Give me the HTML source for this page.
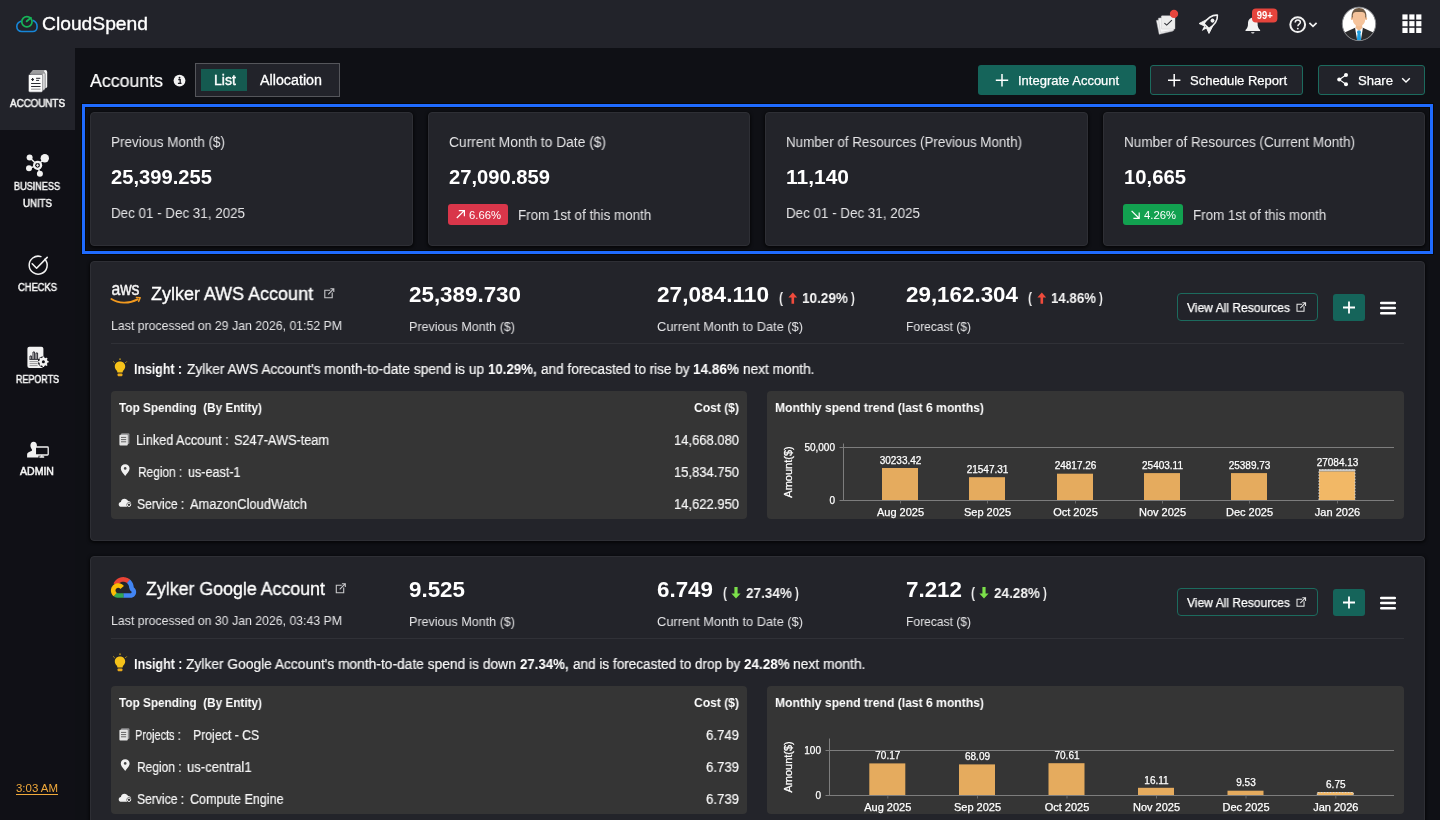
<!DOCTYPE html>
<html><head><meta charset="utf-8"><title>CloudSpend</title><style>
html,body{margin:0;padding:0;}
body{width:1440px;height:820px;overflow:hidden;background:#0f1015;position:relative;font-family:"Liberation Sans",sans-serif;}
.r{position:absolute;box-sizing:border-box;display:block;}
.t{position:absolute;white-space:pre;transform-origin:0 50%;display:block;will-change:transform;}
b{font-weight:700;}
svg text{font-family:"Liberation Sans",sans-serif;}
svg{will-change:transform;}
</style></head>
<body>
<div class="r" style="left:0px;top:0px;width:1440px;height:48px;background:#22232a;"></div>
<div class="r" style="left:0px;top:48px;width:75px;height:772px;background:#101016;"></div>
<div class="r" style="left:0px;top:48px;width:75px;height:82px;background:#22232a;"></div>
<span class="t" style="left:42px;top:9.8px;height:27px;line-height:27px;font-size:19px;font-weight:400;color:#fff;-webkit-text-stroke:0.35px #fff;transform:scaleX(1.0134);">CloudSpend</span>
<svg class="r" style="left:0;top:0;z-index:5;pointer-events:none" width="1440" height="820" viewBox="0 0 1440 820"><path d="M21 21.2 C18.4 22 16.800 24 16.800 26.600 C16.800 29.600 19 31.500 21.600 31.500 L32.800 31.500 C35.400 31.500 37.100 29.400 37.100 26.800 C37.100 24 35.600 21.600 33.300 20.600" fill="none" stroke="#1786d8" stroke-width="1.600" stroke-linecap="round"/><circle cx="26.900" cy="21.800" r="5.150" fill="none" stroke="#17b358" stroke-width="1.700"/><path d="M26.700 21.300 L30.900 17.800" fill="none" stroke="#17b358" stroke-width="1.900" stroke-linecap="round"/><rect x="32.400" y="70" width="14.800" height="18.200" rx="2" fill="#f6f6f6"/><rect x="30.400" y="72.200" width="14.700" height="18.200" rx="2" fill="#f6f6f6" stroke="#22232a" stroke-width="0.550"/><path d="M29.200 74.600 L32.200 70.800 Q32.800 70 34 70 L44.600 70 L43.400 74.600 Z" fill="#9c9c9e"/><rect x="28.400" y="74.400" width="14.400" height="17.800" rx="1.400" fill="#fbfbfb" stroke="#22232a" stroke-width="0.550"/><path d="M31.200 79.500 h2.800 M32.600 78.100 v2.800" stroke="#2a2b31" stroke-width="1.200" fill="none"/><path d="M36.100 78.300 h4.200 M36.100 80.400 h3 M31.100 83.500 h9.400 M31.100 86.500 h9.400" stroke="#2a2b31" stroke-width="1" fill="none"/><path d="M31.100 89.200 h9.400" stroke="#a9a9ab" stroke-width="1.300" fill="none"/><path d="M29.6 157.4 L37.6 165.3 L44.8 158.3 M29 168.3 L37.6 165.3 L39.9 173.6" stroke="#f2f2f2" stroke-width="1.4" fill="none"/><circle cx="29.6" cy="157.4" r="3" fill="#f2f2f2"/><circle cx="44.8" cy="158.3" r="4.2" fill="#f2f2f2"/><circle cx="29" cy="168.3" r="3" fill="#f2f2f2"/><circle cx="39.9" cy="173.8" r="3" fill="#f2f2f2"/><circle cx="37.6" cy="165.3" r="4.6" fill="#f2f2f2"/><circle cx="37.6" cy="165.3" r="2.4" fill="#101016"/><path d="M37.6 163.7 v3.2 M36 165.3 h3.2" stroke="#f2f2f2" stroke-width="0.9"/><path d="M44.900 259.200 A9 9 0 1 1 40.900 256.600" fill="none" stroke="#f2f2f2" stroke-width="1.5" stroke-linecap="round"/><path d="M32.200 263.800 L36.600 268.200 L47.200 257.400" fill="none" stroke="#f2f2f2" stroke-width="1.6" stroke-linecap="round" stroke-linejoin="round"/><rect x="27.4" y="346.8" width="16" height="21.2" rx="2" fill="#f2f2f2"/><path d="M30 359 v-3 h1.6 v3 M33 359 v-7 h1.6 v7 M36 359 v-6 h1.6 v6 M29.4 359.4 h9.6" stroke="#2a2b31" stroke-width="1" fill="none"/><path d="M29.6 361.6 h8 M29.6 363.6 h8 M29.6 365.6 h8" stroke="#8c8c90" stroke-width="0.9"/><circle cx="43.4" cy="361.8" r="5.6" fill="#101016"/><circle cx="43.4" cy="361.8" r="3.1" fill="none" stroke="#f2f2f2" stroke-width="2.2"/><path d="M43.4 356.6 v10.4 M38.2 361.8 h10.4 M39.7 358.1 l7.4 7.4 M47.1 358.1 l-7.4 7.4" stroke="#f2f2f2" stroke-width="1.5"/><circle cx="43.4" cy="361.8" r="1.5" fill="#101016"/><path d="M33.6 441.8 c2 0 3.3 1.5 3.3 3.6 c0 1.4 -0.6 2.7 -1.4 3.5 v1.6 l3 1.4 v5.6 h-11.4 v-2.8 c0 -1.4 0.8 -2.2 2 -2.7 l2.8 -1.2 v-1.6 c-0.9 -0.8 -1.5 -2.1 -1.5 -3.6 c0 -2.2 1.3 -3.8 3.2 -3.8 z" fill="#f2f2f2"/><rect x="35.4" y="447" width="12.8" height="8" rx="0.8" fill="#101016" stroke="#f2f2f2" stroke-width="1.3"/><path d="M39.4 457 h4.8 M41.8 455 v2" stroke="#f2f2f2" stroke-width="1.3"/><path d="M1156.400 20.400 L1169.600 17.600 L1173 31 L1159.200 34.300 Z" fill="#f3f3f3" stroke="#b9b9bd" stroke-width="0.500"/><path d="M1158.400 18.200 L1171.600 16.600 L1174 30.200 L1160.400 32.400 Z" fill="#f7f7f7" stroke="#b9b9bd" stroke-width="0.500"/><rect x="1161.400" y="15.700" width="13.600" height="13.400" rx="0.600" fill="#ececec" stroke="#c6c6ca" stroke-width="0.400"/><path d="M1164.400 23.200 L1166.700 25.100 L1171.900 20.200" stroke="#2e2f35" stroke-width="1.100" fill="none"/><circle cx="1174" cy="13.900" r="4.150" fill="#e8453c"/><g transform="translate(1210.600 21.900) rotate(45)"><path d="M-4.400 1.200 L-7 9.300 L-0.800 7 Z M4.400 1.200 L7 9.300 L0.800 7 Z" fill="#f2f2f2" stroke="#f2f2f2" stroke-width="0.900" stroke-linejoin="round"/><path d="M-1.900 7.200 L0.200 12.600 L1.900 7.200 Z" fill="#f2f2f2"/><path d="M0 -9.600 C4.200 -6 4.800 0 3.600 6 L-3.600 6 C-4.800 0 -4.200 -6 0 -9.600 Z" fill="#22232a" stroke="#f2f2f2" stroke-width="1.600" stroke-linejoin="round"/><circle cx="0.400" cy="-2.300" r="2" fill="#f2f2f2"/></g><path d="M1252.800 17.800 c3.200 0 4.800 2.500 4.800 5.800 c0 3.200 0.700 5 2.500 6.300 v1.100 h-14.600 v-1.100 c1.800 -1.300 2.500 -3.100 2.500 -6.300 c0 -3.300 1.600 -5.800 4.800 -5.800 z" fill="#f2f2f2"/><path d="M1251 32.2 a1.9 1.9 0 0 0 3.6 0 z" fill="#f2f2f2"/><rect x="1252" y="8.4" width="25.4" height="14" rx="4" fill="#e5443c"/><text x="1264.8" y="19.2" font-size="10" font-weight="700" fill="#fff" text-anchor="middle" textLength="16" lengthAdjust="spacingAndGlyphs">99+</text><circle cx="1297.700" cy="24.600" r="7.400" fill="none" stroke="#f2f2f2" stroke-width="2"/><path d="M1295.2 22.6 c0 -1.7 1.1 -2.7 2.6 -2.7 c1.5 0 2.6 0.9 2.6 2.3 c0 1.9 -2.5 2 -2.5 4" fill="none" stroke="#f2f2f2" stroke-width="1.5"/><circle cx="1297.8" cy="28.6" r="0.95" fill="#f2f2f2"/><path d="M1309.4 22.8 l3.6 3.6 l3.6 -3.6" fill="none" stroke="#f2f2f2" stroke-width="1.7"/><clipPath id="av"><circle cx="1359" cy="23.900" r="16.300"/></clipPath><circle cx="1359" cy="23.900" r="16.700" fill="#fff" stroke="#8a8b8f" stroke-width="1"/><g clip-path="url(#av)"><path d="M1340 44 L1340 35 L1345.200 32.300 L1355.100 27.800 L1362.900 27.800 L1372.800 32.300 L1378 35 L1378 44 Z" fill="#2b2b2d"/><path d="M1355.500 27.300 L1362.500 27.300 L1362.800 28.800 L1360.800 40.500 L1357.200 40.500 L1355.200 28.800 Z" fill="#fff"/><path d="M1355.800 24.500 h6.400 v3.600 l-3.200 2.800 l-3.200 -2.800 z" fill="#f0bb90"/><path d="M1357.600 30.600 h2.800 l0.700 1.700 l-0.600 1.200 l0.700 6.900 h-4.400 l0.700 -6.900 l-0.600 -1.200 z" fill="#1f9ee0"/><path d="M1351.600 17.400 c-0.400 -6 2.600 -9.300 7.400 -9.300 c4.800 0 7.800 3.300 7.400 9.300 l-0.500 1.600 l-13.800 0 z" fill="#6f5a45"/><ellipse cx="1351.900" cy="18.400" rx="1" ry="1.500" fill="#e8b48a"/><ellipse cx="1366.100" cy="18.400" rx="1" ry="1.500" fill="#e8b48a"/><path d="M1352.800 15.200 c0 -2.400 1.600 -3.200 3.200 -3.200 h6 c1.600 0 3.200 0.800 3.200 3.200 v4.400 c0 3.800 -2.800 6.600 -6.200 6.600 c-3.400 0 -6.200 -2.800 -6.200 -6.600 z" fill="#f5c39b"/></g><rect x="1402.4" y="14.4" width="5.2" height="5.2" fill="#fff"/><rect x="1409.3" y="14.4" width="5.2" height="5.2" fill="#fff"/><rect x="1416.2" y="14.4" width="5.2" height="5.2" fill="#fff"/><rect x="1402.4" y="21.1" width="5.2" height="5.2" fill="#fff"/><rect x="1409.3" y="21.1" width="5.2" height="5.2" fill="#fff"/><rect x="1416.2" y="21.1" width="5.2" height="5.2" fill="#fff"/><rect x="1402.4" y="27.8" width="5.2" height="5.2" fill="#fff"/><rect x="1409.3" y="27.8" width="5.2" height="5.2" fill="#fff"/><rect x="1416.2" y="27.8" width="5.2" height="5.2" fill="#fff"/><circle cx="179.5" cy="80.6" r="5.9" fill="#f2f2f2"/><path d="M178.3 79.6 h1.9 v3.600 M177.900 83.4 h3.6" stroke="#16161c" stroke-width="1.3" fill="none"/><circle cx="179.5" cy="77.700" r="0.95" fill="#16161c"/><path d="M1002 74 v12.400 M995.8 80.2 h12.400" stroke="#fff" stroke-width="1.5"/><path d="M1174.200 74 v12.400 M1168 80.2 h12.400" stroke="#fff" stroke-width="1.5"/><path d="M1345.600 75.2 L1339.400 79.6 L1345.600 84" stroke="#fff" stroke-width="1.1" fill="none"/><circle cx="1346" cy="75" r="2" fill="#fff"/><circle cx="1339.200" cy="79.6" r="2" fill="#fff"/><circle cx="1346" cy="84.2" r="2" fill="#fff"/><path d="M1402.200 78.2 l3.800 3.800 l3.800 -3.800" fill="none" stroke="#fff" stroke-width="1.4"/><path d="M456.800 218 L464 210.800 M458.800 210.600 H464.400 V216.200" stroke="#fff" stroke-width="1.2" fill="none"/><path d="M1131.600 210.800 L1138.800 218 M1133.400 218.400 H1139.200 V212.600" stroke="#fff" stroke-width="1.2" fill="none"/></svg>
<span class="t" style="left:10px;top:96.5px;height:14px;line-height:14px;font-size:10px;font-weight:400;color:#f6f6f6;-webkit-text-stroke:0.5px #f6f6f6;transform:scaleX(0.9800);">ACCOUNTS</span>
<span class="t" style="left:14px;top:179.5px;height:14px;line-height:14px;font-size:10px;font-weight:400;color:#f6f6f6;-webkit-text-stroke:0.5px #f6f6f6;transform:scaleX(0.9095);">BUSINESS</span>
<span class="t" style="left:23px;top:196.5px;height:14px;line-height:14px;font-size:10px;font-weight:400;color:#f6f6f6;-webkit-text-stroke:0.5px #f6f6f6;transform:scaleX(0.9667);">UNITS</span>
<span class="t" style="left:18px;top:280.5px;height:14px;line-height:14px;font-size:10px;font-weight:400;color:#f6f6f6;-webkit-text-stroke:0.5px #f6f6f6;transform:scaleX(0.9355);">CHECKS</span>
<span class="t" style="left:16px;top:372.5px;height:14px;line-height:14px;font-size:10px;font-weight:400;color:#f6f6f6;-webkit-text-stroke:0.5px #f6f6f6;transform:scaleX(0.8926);">REPORTS</span>
<span class="t" style="left:20px;top:464.5px;height:14px;line-height:14px;font-size:10px;font-weight:400;color:#f6f6f6;-webkit-text-stroke:0.5px #f6f6f6;transform:scaleX(1.0548);">ADMIN</span>
<span class="t" style="left:16px;top:780.5px;height:15px;line-height:15px;font-size:11px;font-weight:400;color:#f0a93b;text-decoration:underline;text-underline-offset:2px;transform:scaleX(1.0407);">3:03 AM</span>
<span class="t" style="left:90px;top:68.8px;height:25px;line-height:25px;font-size:18px;font-weight:400;color:#fff;-webkit-text-stroke:0.2px #fff;transform:scaleX(0.9859);">Accounts</span>
<div class="r" style="left:195px;top:63px;width:145px;height:34px;background:#22232a;border:1px solid #55565b;"></div>
<div class="r" style="left:201px;top:69px;width:46px;height:22px;background:#155a50;"></div>
<span class="t" style="left:214px;top:69.8px;height:20px;line-height:20px;font-size:14px;font-weight:400;color:#fff;-webkit-text-stroke:0.4px #fff;transform:scaleX(0.9864);">List</span>
<span class="t" style="left:260px;top:69.7px;height:20px;line-height:20px;font-size:14px;font-weight:400;color:#fff;-webkit-text-stroke:0.3px #fff;transform:scaleX(1.0214);">Allocation</span>
<div class="r" style="left:978px;top:65px;width:158px;height:30px;background:#15645a;border-radius:3px;"></div>
<div class="r" style="left:1150px;top:65px;width:153px;height:30px;background:#22232a;border:1px solid #1c6b5e;border-radius:3px;"></div>
<div class="r" style="left:1318px;top:65px;width:107px;height:30px;background:#22232a;border:1px solid #1c6b5e;border-radius:3px;"></div>
<span class="t" style="left:1018px;top:71.5px;height:18px;line-height:18px;font-size:13px;font-weight:400;color:#fff;-webkit-text-stroke:0.25px #fff;transform:scaleX(0.9981);">Integrate Account</span>
<span class="t" style="left:1190px;top:71.5px;height:18px;line-height:18px;font-size:13px;font-weight:400;color:#fff;-webkit-text-stroke:0.25px #fff;transform:scaleX(1.0016);">Schedule Report</span>
<span class="t" style="left:1358px;top:71.5px;height:18px;line-height:18px;font-size:13px;font-weight:400;color:#fff;-webkit-text-stroke:0.25px #fff;transform:scaleX(1.0086);">Share</span>
<div class="r" style="left:82px;top:104px;width:1351px;height:150px;border:3px solid #1f6bff;box-shadow:0 0 0 1px #08080a, inset 0 0 0 1px #08080a;"></div>
<div class="r" style="left:90px;top:112px;width:322.5px;height:133.5px;background:#23242a;border:1px solid #2e2f35;border-radius:4px;box-shadow:0 1px 3px 1px rgba(0,0,0,.6);"></div>
<div class="r" style="left:427.5px;top:112px;width:322.5px;height:133.5px;background:#23242a;border:1px solid #2e2f35;border-radius:4px;box-shadow:0 1px 3px 1px rgba(0,0,0,.6);"></div>
<div class="r" style="left:765px;top:112px;width:322.5px;height:133.5px;background:#23242a;border:1px solid #2e2f35;border-radius:4px;box-shadow:0 1px 3px 1px rgba(0,0,0,.6);"></div>
<div class="r" style="left:1102.5px;top:112px;width:322.5px;height:133.5px;background:#23242a;border:1px solid #2e2f35;border-radius:4px;box-shadow:0 1px 3px 1px rgba(0,0,0,.6);"></div>
<span class="t" style="left:111px;top:131.5px;height:20px;line-height:20px;font-size:14px;font-weight:400;color:#e4e4e6;transform:scaleX(0.9638);">Previous Month ($)</span>
<span class="t" style="left:449px;top:131.5px;height:20px;line-height:20px;font-size:14px;font-weight:400;color:#e4e4e6;transform:scaleX(0.9842);">Current Month to Date ($)</span>
<span class="t" style="left:786px;top:131.5px;height:20px;line-height:20px;font-size:14px;font-weight:400;color:#e4e4e6;transform:scaleX(0.9568);">Number of Resources (Previous Month)</span>
<span class="t" style="left:1124px;top:131.5px;height:20px;line-height:20px;font-size:14px;font-weight:400;color:#e4e4e6;transform:scaleX(0.9670);">Number of Resources (Current Month)</span>
<span class="t" style="left:111px;top:162.9px;height:28px;line-height:28px;font-size:20px;font-weight:700;color:#fff;transform:scaleX(1.0089);">25,399.255</span>
<span class="t" style="left:449px;top:162.9px;height:28px;line-height:28px;font-size:20px;font-weight:700;color:#fff;transform:scaleX(1.0089);">27,090.859</span>
<span class="t" style="left:786px;top:162.9px;height:28px;line-height:28px;font-size:20px;font-weight:700;color:#fff;transform:scaleX(1.0486);">11,140</span>
<span class="t" style="left:1124px;top:162.9px;height:28px;line-height:28px;font-size:20px;font-weight:700;color:#fff;transform:scaleX(1.0135);">10,665</span>
<span class="t" style="left:111px;top:203.0px;height:20px;line-height:20px;font-size:14px;font-weight:400;color:#e4e4e6;transform:scaleX(0.9565);">Dec 01 - Dec 31, 2025</span>
<span class="t" style="left:786px;top:203.0px;height:20px;line-height:20px;font-size:14px;font-weight:400;color:#e4e4e6;transform:scaleX(0.9565);">Dec 01 - Dec 31, 2025</span>
<span class="t" style="left:518px;top:205.0px;height:20px;line-height:20px;font-size:14px;font-weight:400;color:#e4e4e6;transform:scaleX(0.9571);">From 1st of this month</span>
<span class="t" style="left:1193px;top:205.0px;height:20px;line-height:20px;font-size:14px;font-weight:400;color:#e4e4e6;transform:scaleX(0.9571);">From 1st of this month</span>
<div class="r" style="left:448px;top:204px;width:60px;height:20.5px;background:#d9364a;border-radius:3px;"></div>
<div class="r" style="left:1123px;top:204px;width:60px;height:20.5px;background:#12a150;border-radius:3px;"></div>
<span class="t" style="left:469.2px;top:207.8px;height:15px;line-height:15px;font-size:11px;font-weight:400;color:#fff;transform:scaleX(1.0255);">6.66%</span>
<span class="t" style="left:1144.2px;top:207.8px;height:15px;line-height:15px;font-size:11px;font-weight:400;color:#fff;transform:scaleX(1.0255);">4.26%</span>
<div class="r" style="left:90px;top:261px;width:1335px;height:280px;background:#23242a;border:1px solid #2e2f35;border-radius:4px;box-shadow:0 1px 3px 1px rgba(0,0,0,.6);"></div>
<span class="t" style="left:151px;top:281.6px;height:25px;line-height:25px;font-size:18px;font-weight:400;color:#fff;-webkit-text-stroke:0.35px #fff;transform:scaleX(0.9976);">Zylker AWS Account</span>
<span class="t" style="left:111px;top:317.4px;height:18px;line-height:18px;font-size:13px;font-weight:400;color:#e4e4e6;transform:scaleX(0.9456);">Last processed on 29 Jan 2026, 01:52 PM</span>
<span class="t" style="left:409px;top:279.3px;height:31px;line-height:31px;font-size:22px;font-weight:700;color:#fff;transform:scaleX(1.0172);">25,389.730</span>
<span class="t" style="left:409px;top:317.5px;height:18px;line-height:18px;font-size:13px;font-weight:400;color:#e4e4e6;transform:scaleX(0.9651);">Previous Month ($)</span>
<span class="t" style="left:657px;top:279.3px;height:31px;line-height:31px;font-size:22px;font-weight:700;color:#fff;transform:scaleX(1.0284);">27,084.110</span>
<span class="t" style="left:657px;top:317.5px;height:18px;line-height:18px;font-size:13px;font-weight:400;color:#e4e4e6;transform:scaleX(0.9857);">Current Month to Date ($)</span>
<span class="t" style="left:779px;top:287.3px;height:21px;line-height:21px;font-size:15px;font-weight:700;color:#f4f4f4;transform:scaleX(0.8000);">(</span>
<span class="t" style="left:801.5px;top:287.3px;height:21px;line-height:21px;font-size:15px;font-weight:700;color:#f4f4f4;transform:scaleX(0.9042);">10.29%</span>
<span class="t" style="left:850.7px;top:287.3px;height:21px;line-height:21px;font-size:15px;font-weight:700;color:#f4f4f4;transform:scaleX(0.7600);">)</span>
<span class="t" style="left:906px;top:279.3px;height:31px;line-height:31px;font-size:22px;font-weight:700;color:#fff;transform:scaleX(1.0172);">29,162.304</span>
<span class="t" style="left:906px;top:317.5px;height:18px;line-height:18px;font-size:13px;font-weight:400;color:#e4e4e6;transform:scaleX(0.9275);">Forecast ($)</span>
<span class="t" style="left:1028px;top:287.3px;height:21px;line-height:21px;font-size:15px;font-weight:700;color:#f4f4f4;transform:scaleX(0.8000);">(</span>
<span class="t" style="left:1050.5px;top:287.3px;height:21px;line-height:21px;font-size:15px;font-weight:700;color:#f4f4f4;transform:scaleX(0.8845);">14.86%</span>
<span class="t" style="left:1098.7px;top:287.3px;height:21px;line-height:21px;font-size:15px;font-weight:700;color:#f4f4f4;transform:scaleX(0.7600);">)</span>
<div class="r" style="left:1176.7px;top:293.3px;width:141.29999999999995px;height:28.19999999999999px;background:#22232a;border:1px solid #1c6b5e;border-radius:4px;"></div>
<span class="t" style="left:1187px;top:298.5px;height:18px;line-height:18px;font-size:12.5px;font-weight:400;color:#fff;-webkit-text-stroke:0.25px #fff;transform:scaleX(0.9647);">View All Resources</span>
<div class="r" style="left:1333px;top:294px;width:32px;height:27px;background:#15645a;border-radius:3px;"></div>
<div class="r" style="left:111px;top:343px;width:1293px;height:1px;background:#303137;"></div>
<span class="t" style="left:134.4px;top:359.0px;height:20px;line-height:20px;font-size:14px;font-weight:700;color:#fff;transform:scaleX(0.8817);">Insight :</span>
<span class="t" style="left:186.6px;top:359.0px;height:20px;line-height:20px;font-size:14px;font-weight:400;color:#f6f6f6;-webkit-text-stroke:0.2px #f6f6f6;transform:scaleX(0.9820);">Zylker AWS Account's month-to-date spend is up</span>
<span class="t" style="left:487.8px;top:359.0px;height:20px;line-height:20px;font-size:14px;font-weight:700;color:#fff;transform:scaleX(0.9479);">10.29%,</span>
<span class="t" style="left:540.7px;top:359.0px;height:20px;line-height:20px;font-size:14px;font-weight:400;color:#f6f6f6;-webkit-text-stroke:0.2px #f6f6f6;transform:scaleX(0.9693);">and forecasted to rise by</span>
<span class="t" style="left:693.3px;top:359.0px;height:20px;line-height:20px;font-size:14px;font-weight:700;color:#fff;transform:scaleX(0.9687);">14.86%</span>
<span class="t" style="left:742.7px;top:359.0px;height:20px;line-height:20px;font-size:14px;font-weight:400;color:#f6f6f6;-webkit-text-stroke:0.2px #f6f6f6;transform:scaleX(0.9774);">next month.</span>
<div class="r" style="left:111px;top:391.4px;width:636px;height:127.60000000000002px;background:#353535;border-radius:4px;"></div>
<div class="r" style="left:767px;top:391.4px;width:637px;height:127.60000000000002px;background:#353535;border-radius:4px;"></div>
<span class="t" style="left:119px;top:399.4px;height:18px;line-height:18px;font-size:13px;font-weight:700;color:#fff;transform:scaleX(0.9055);">Top Spending  (By Entity)</span>
<span class="t" style="left:694px;top:399.4px;height:18px;line-height:18px;font-size:13px;font-weight:700;color:#fff;transform:scaleX(0.9299);">Cost ($)</span>
<span class="t" style="left:775px;top:399.4px;height:18px;line-height:18px;font-size:13px;font-weight:700;color:#fff;transform:scaleX(0.9334);">Monthly spend trend (last 6 months)</span>
<span class="t" style="left:135.5px;top:429.6px;height:20px;line-height:20px;font-size:14px;font-weight:400;color:#f6f6f6;-webkit-text-stroke:0.2px #f6f6f6;transform:scaleX(0.9032);">Linked Account :</span>
<span class="t" style="left:233.8px;top:429.6px;height:20px;line-height:20px;font-size:14px;font-weight:400;color:#f6f6f6;-webkit-text-stroke:0.2px #f6f6f6;transform:scaleX(0.9090);">S247-AWS-team</span>
<span class="t" style="left:674px;top:429.6px;height:20px;line-height:20px;font-size:14px;font-weight:400;color:#f6f6f6;-webkit-text-stroke:0.2px #f6f6f6;transform:scaleX(0.9275);">14,668.080</span>
<span class="t" style="left:137.5px;top:461.6px;height:20px;line-height:20px;font-size:14px;font-weight:400;color:#f6f6f6;-webkit-text-stroke:0.2px #f6f6f6;transform:scaleX(0.8494);">Region :</span>
<span class="t" style="left:188px;top:461.6px;height:20px;line-height:20px;font-size:14px;font-weight:400;color:#f6f6f6;-webkit-text-stroke:0.2px #f6f6f6;transform:scaleX(0.8996);">us-east-1</span>
<span class="t" style="left:674px;top:461.6px;height:20px;line-height:20px;font-size:14px;font-weight:400;color:#f6f6f6;-webkit-text-stroke:0.2px #f6f6f6;transform:scaleX(0.9275);">15,834.750</span>
<span class="t" style="left:137px;top:493.6px;height:20px;line-height:20px;font-size:14px;font-weight:400;color:#f6f6f6;-webkit-text-stroke:0.2px #f6f6f6;transform:scaleX(0.8684);">Service :</span>
<span class="t" style="left:190px;top:493.6px;height:20px;line-height:20px;font-size:14px;font-weight:400;color:#f6f6f6;-webkit-text-stroke:0.2px #f6f6f6;transform:scaleX(0.9206);">AmazonCloudWatch</span>
<span class="t" style="left:674px;top:493.6px;height:20px;line-height:20px;font-size:14px;font-weight:400;color:#f6f6f6;-webkit-text-stroke:0.2px #f6f6f6;transform:scaleX(0.9275);">14,622.950</span>
<svg class="r" style="left:0;top:0;z-index:4;pointer-events:none" width="1440" height="820" viewBox="0 0 1440 820"><text x="111.500" y="294.6" font-size="17.500" font-weight="400" fill="#f4f4f4" stroke="#f4f4f4" stroke-width="0.450" textLength="28" lengthAdjust="spacingAndGlyphs">aws</text><path d="M111.400 299 c7 4.600 17.600 5 26.200 0.400" fill="none" stroke="#f29a1f" stroke-width="1.900" stroke-linecap="round"/><path d="M136.400 297.4 l3.800 0.400 l-1.600 3.600" fill="none" stroke="#f29a1f" stroke-width="1.500" stroke-linecap="round" stroke-linejoin="round"/><g transform="translate(329 293.5) scale(1.0)" fill="none" stroke="#c9c9cc" stroke-width="1.1"><path d="M1.200 -3.200 H-4.200 V4.200 H3.200 V-1"/><path d="M-0.800 0.800 L4.600 -4.600 M1.400 -4.800 H4.800 V-1.400"/></g><g transform="translate(1301 307.3) scale(0.95)" fill="none" stroke="#e6e6e6" stroke-width="1.1"><path d="M1.200 -3.200 H-4.200 V4.200 H3.200 V-1"/><path d="M-0.800 0.800 L4.600 -4.600 M1.400 -4.800 H4.800 V-1.400"/></g><path d="M1349 301.5 v12 M1343 307.5 h12" stroke="#fff" stroke-width="1.8"/><path d="M1381.2 303 h13.600 M1381.2 308.1 h13.600 M1381.2 313.2 h13.600" stroke="#fff" stroke-width="2.500" stroke-linecap="round"/><path d="M792.8 292.5 l4.400 5 h-3.100 v6.300 h-2.600 v-6.300 h-3.100 z" fill="#ef4b3c"/><path d="M1041.8 292.5 l4.400 5 h-3.100 v6.300 h-2.600 v-6.300 h-3.100 z" fill="#ef4b3c"/><path d="M120 361.5 c3.200 0 5.200 2.300 5.200 5 c0 1.800 -0.900 3 -1.900 4.100 c-0.500 0.600 -0.700 1.200 -0.700 2 h-5.200 c0 -0.800 -0.200 -1.400 -0.700 -2 c-1 -1.100 -1.900 -2.300 -1.900 -4.100 c0 -2.700 2 -5 5.200 -5 z" fill="#f5c21a"/><rect x="117.6" y="373.4" width="4.800" height="2.800" rx="0.800" fill="#e9a91a"/><path d="M120 358.4 v1.600 M113.4 361.6 l1.100 1.100 M126.6 361.6 l-1.100 1.100" stroke="#f5c21a" stroke-width="1"/><rect x="121" y="433.2" width="8.400" height="10.800" rx="1" fill="#8e8e90"/><rect x="119.400" y="434.8" width="8.400" height="10.800" rx="1" fill="#e4e4e4"/><path d="M121 437.4 h5.200 M121 439.6 h5.200 M121 441.8 h5.200" stroke="#555" stroke-width="0.900"/><path d="M125.200 464.2 c2.600 0 4.400 1.900 4.400 4.300 c0 2.900 -2.900 5.200 -4.400 7.600 c-1.500 -2.400 -4.400 -4.700 -4.400 -7.600 c0 -2.400 1.800 -4.300 4.400 -4.300 z" fill="#f0f0f0"/><circle cx="125.200" cy="468.4" r="1.300" fill="#444"/><path d="M121.600 506.8 c-1.800 0 -2.900 -1 -2.900 -2.400 c0 -1.300 0.900 -2.200 2.200 -2.400 c0.300 -2 1.700 -3.200 3.600 -3.200 c1.700 0 2.900 0.900 3.500 2.300 c1.900 0.100 3.200 1.200 3.200 2.900 c0 1.700 -1.300 2.800 -3.200 2.800 z" fill="#f0f0f0"/><circle cx="129" cy="504.8" r="2.500" fill="#353535"/><circle cx="129" cy="504.8" r="1.700" fill="none" stroke="#f0f0f0" stroke-width="1"/><path d="M839.5 447.5 H1394 M839.5 500.5 H1394" stroke="#7d7d7d" stroke-width="1" fill="none"/><path d="M843.5 443.5 V500.5" stroke="#7d7d7d" stroke-width="1" fill="none"/><text x="835" y="451" font-size="10" fill="#fff" stroke="#fff" stroke-width="0.250" text-anchor="end">50,000</text><text x="835" y="504" font-size="10" fill="#fff" stroke="#fff" stroke-width="0.250" text-anchor="end">0</text><text transform="translate(792 472.0) rotate(-90)" font-size="11" fill="#fff" stroke="#fff" stroke-width="0.250" text-anchor="middle">Amount($)</text><rect x="882" y="468.0" width="36" height="32.0" fill="#e5ab5e"/><path d="M900.5 501 v2.500" stroke="#6a6a6a" stroke-width="1"/><text x="900.5" y="463.7" font-size="10" fill="#fff" stroke="#fff" stroke-width="0.250" text-anchor="middle">30233.42</text><text x="900.5" y="516" font-size="11" fill="#fff" stroke="#fff" stroke-width="0.250" text-anchor="middle">Aug 2025</text><rect x="969" y="477.2" width="36" height="22.8" fill="#e5ab5e"/><path d="M987.5 501 v2.500" stroke="#6a6a6a" stroke-width="1"/><text x="987.5" y="472.9" font-size="10" fill="#fff" stroke="#fff" stroke-width="0.250" text-anchor="middle">21547.31</text><text x="987.5" y="516" font-size="11" fill="#fff" stroke="#fff" stroke-width="0.250" text-anchor="middle">Sep 2025</text><rect x="1057" y="473.7" width="36" height="26.3" fill="#e5ab5e"/><path d="M1075.5 501 v2.500" stroke="#6a6a6a" stroke-width="1"/><text x="1075.5" y="469.4" font-size="10" fill="#fff" stroke="#fff" stroke-width="0.250" text-anchor="middle">24817.26</text><text x="1075.5" y="516" font-size="11" fill="#fff" stroke="#fff" stroke-width="0.250" text-anchor="middle">Oct 2025</text><rect x="1144" y="473.1" width="36" height="26.9" fill="#e5ab5e"/><path d="M1162.5 501 v2.500" stroke="#6a6a6a" stroke-width="1"/><text x="1162.5" y="468.8" font-size="10" fill="#fff" stroke="#fff" stroke-width="0.250" text-anchor="middle">25403.11</text><text x="1162.5" y="516" font-size="11" fill="#fff" stroke="#fff" stroke-width="0.250" text-anchor="middle">Nov 2025</text><rect x="1231" y="473.1" width="36" height="26.9" fill="#e5ab5e"/><path d="M1249.5 501 v2.500" stroke="#6a6a6a" stroke-width="1"/><text x="1249.5" y="468.8" font-size="10" fill="#fff" stroke="#fff" stroke-width="0.250" text-anchor="middle">25389.73</text><text x="1249.5" y="516" font-size="11" fill="#fff" stroke="#fff" stroke-width="0.250" text-anchor="middle">Dec 2025</text><rect x="1319" y="471.3" width="36" height="28.7" fill="#f2b866"/><rect x="1319" y="469.3" width="36" height="2" fill="#c9c9c9"/><path d="M1319 500 V469.8 H1355 V500" fill="none" stroke="#d4d4d4" stroke-width="1" stroke-dasharray="1.600 1.400"/><path d="M1337.5 501 v2.500" stroke="#6a6a6a" stroke-width="1"/><text x="1337.5" y="465.6" font-size="10" fill="#fff" stroke="#fff" stroke-width="0.250" text-anchor="middle">27084.13</text><text x="1337.5" y="516" font-size="11" fill="#fff" stroke="#fff" stroke-width="0.250" text-anchor="middle">Jan 2026</text></svg>
<div class="r" style="left:90px;top:556px;width:1335px;height:280px;background:#23242a;border:1px solid #2e2f35;border-radius:4px;box-shadow:0 1px 3px 1px rgba(0,0,0,.6);"></div>
<span class="t" style="left:146px;top:576.6px;height:25px;line-height:25px;font-size:18px;font-weight:400;color:#fff;-webkit-text-stroke:0.35px #fff;transform:scaleX(0.9884);">Zylker Google Account</span>
<span class="t" style="left:111px;top:612.4px;height:18px;line-height:18px;font-size:13px;font-weight:400;color:#e4e4e6;transform:scaleX(0.9456);">Last processed on 30 Jan 2026, 03:43 PM</span>
<span class="t" style="left:409px;top:574.3px;height:31px;line-height:31px;font-size:22px;font-weight:700;color:#fff;transform:scaleX(1.0170);">9.525</span>
<span class="t" style="left:409px;top:612.5px;height:18px;line-height:18px;font-size:13px;font-weight:400;color:#e4e4e6;transform:scaleX(0.9651);">Previous Month ($)</span>
<span class="t" style="left:657px;top:574.3px;height:31px;line-height:31px;font-size:22px;font-weight:700;color:#fff;transform:scaleX(1.0170);">6.749</span>
<span class="t" style="left:657px;top:612.5px;height:18px;line-height:18px;font-size:13px;font-weight:400;color:#e4e4e6;transform:scaleX(0.9857);">Current Month to Date ($)</span>
<span class="t" style="left:723px;top:582.3px;height:21px;line-height:21px;font-size:15px;font-weight:700;color:#f4f4f4;transform:scaleX(0.8000);">(</span>
<span class="t" style="left:745.5px;top:582.3px;height:21px;line-height:21px;font-size:15px;font-weight:700;color:#f4f4f4;transform:scaleX(0.9042);">27.34%</span>
<span class="t" style="left:794.7px;top:582.3px;height:21px;line-height:21px;font-size:15px;font-weight:700;color:#f4f4f4;transform:scaleX(0.7600);">)</span>
<span class="t" style="left:906px;top:574.3px;height:31px;line-height:31px;font-size:22px;font-weight:700;color:#fff;transform:scaleX(1.0170);">7.212</span>
<span class="t" style="left:906px;top:612.5px;height:18px;line-height:18px;font-size:13px;font-weight:400;color:#e4e4e6;transform:scaleX(0.9275);">Forecast ($)</span>
<span class="t" style="left:971px;top:582.3px;height:21px;line-height:21px;font-size:15px;font-weight:700;color:#f4f4f4;transform:scaleX(0.8000);">(</span>
<span class="t" style="left:993.5px;top:582.3px;height:21px;line-height:21px;font-size:15px;font-weight:700;color:#f4f4f4;transform:scaleX(0.9042);">24.28%</span>
<span class="t" style="left:1042.7px;top:582.3px;height:21px;line-height:21px;font-size:15px;font-weight:700;color:#f4f4f4;transform:scaleX(0.7600);">)</span>
<div class="r" style="left:1176.7px;top:588.3px;width:141.29999999999995px;height:28.200000000000045px;background:#22232a;border:1px solid #1c6b5e;border-radius:4px;"></div>
<span class="t" style="left:1187px;top:593.5px;height:18px;line-height:18px;font-size:12.5px;font-weight:400;color:#fff;-webkit-text-stroke:0.25px #fff;transform:scaleX(0.9647);">View All Resources</span>
<div class="r" style="left:1333px;top:589px;width:32px;height:27px;background:#15645a;border-radius:3px;"></div>
<div class="r" style="left:111px;top:638px;width:1293px;height:1px;background:#303137;"></div>
<span class="t" style="left:134.4px;top:654.0px;height:20px;line-height:20px;font-size:14px;font-weight:700;color:#fff;transform:scaleX(0.8891);">Insight :</span>
<span class="t" style="left:186.2px;top:654.0px;height:20px;line-height:20px;font-size:14px;font-weight:400;color:#f6f6f6;-webkit-text-stroke:0.2px #f6f6f6;transform:scaleX(0.9846);">Zylker Google Account's month-to-date spend is down</span>
<span class="t" style="left:520px;top:654.0px;height:20px;line-height:20px;font-size:14px;font-weight:700;color:#fff;transform:scaleX(0.9460);">27.34%,</span>
<span class="t" style="left:572.5px;top:654.0px;height:20px;line-height:20px;font-size:14px;font-weight:400;color:#f6f6f6;-webkit-text-stroke:0.2px #f6f6f6;transform:scaleX(0.9677);">and is forecasted to drop by</span>
<span class="t" style="left:743.8px;top:654.0px;height:20px;line-height:20px;font-size:14px;font-weight:700;color:#fff;transform:scaleX(0.9645);">24.28%</span>
<span class="t" style="left:792.5px;top:654.0px;height:20px;line-height:20px;font-size:14px;font-weight:400;color:#f6f6f6;-webkit-text-stroke:0.2px #f6f6f6;transform:scaleX(0.9910);">next month.</span>
<div class="r" style="left:111px;top:686.4px;width:636px;height:127.60000000000002px;background:#353535;border-radius:4px;"></div>
<div class="r" style="left:767px;top:686.4px;width:637px;height:127.60000000000002px;background:#353535;border-radius:4px;"></div>
<span class="t" style="left:119px;top:694.4px;height:18px;line-height:18px;font-size:13px;font-weight:700;color:#fff;transform:scaleX(0.9055);">Top Spending  (By Entity)</span>
<span class="t" style="left:694px;top:694.4px;height:18px;line-height:18px;font-size:13px;font-weight:700;color:#fff;transform:scaleX(0.9299);">Cost ($)</span>
<span class="t" style="left:775px;top:694.4px;height:18px;line-height:18px;font-size:13px;font-weight:700;color:#fff;transform:scaleX(0.9334);">Monthly spend trend (last 6 months)</span>
<span class="t" style="left:135.4px;top:724.6px;height:20px;line-height:20px;font-size:14px;font-weight:400;color:#f6f6f6;-webkit-text-stroke:0.2px #f6f6f6;transform:scaleX(0.7831);">Projects :</span>
<span class="t" style="left:192.8px;top:724.6px;height:20px;line-height:20px;font-size:14px;font-weight:400;color:#f6f6f6;-webkit-text-stroke:0.2px #f6f6f6;transform:scaleX(0.8772);">Project - CS</span>
<span class="t" style="left:706px;top:724.6px;height:20px;line-height:20px;font-size:14px;font-weight:400;color:#f6f6f6;-webkit-text-stroke:0.2px #f6f6f6;transform:scaleX(0.9416);">6.749</span>
<span class="t" style="left:137.4px;top:756.6px;height:20px;line-height:20px;font-size:14px;font-weight:400;color:#f6f6f6;-webkit-text-stroke:0.2px #f6f6f6;transform:scaleX(0.8551);">Region :</span>
<span class="t" style="left:187.4px;top:756.6px;height:20px;line-height:20px;font-size:14px;font-weight:400;color:#f6f6f6;-webkit-text-stroke:0.2px #f6f6f6;transform:scaleX(0.9326);">us-central1</span>
<span class="t" style="left:706px;top:756.6px;height:20px;line-height:20px;font-size:14px;font-weight:400;color:#f6f6f6;-webkit-text-stroke:0.2px #f6f6f6;transform:scaleX(0.9416);">6.739</span>
<span class="t" style="left:137.4px;top:788.6px;height:20px;line-height:20px;font-size:14px;font-weight:400;color:#f6f6f6;-webkit-text-stroke:0.2px #f6f6f6;transform:scaleX(0.8647);">Service :</span>
<span class="t" style="left:189.9px;top:788.6px;height:20px;line-height:20px;font-size:14px;font-weight:400;color:#f6f6f6;-webkit-text-stroke:0.2px #f6f6f6;transform:scaleX(0.8974);">Compute Engine</span>
<span class="t" style="left:706px;top:788.6px;height:20px;line-height:20px;font-size:14px;font-weight:400;color:#f6f6f6;-webkit-text-stroke:0.2px #f6f6f6;transform:scaleX(0.9416);">6.739</span>
<svg class="r" style="left:0;top:0;z-index:4;pointer-events:none" width="1440" height="820" viewBox="0 0 1440 820"><path d="M115.60 584.53 L115.87 583.93 L116.18 583.36 L116.55 582.81 L116.95 582.29 L117.39 581.81 L117.87 581.36 L118.39 580.96 L118.94 580.60 L119.51 580.28 L120.11 580.01 L120.72 579.78 L121.36 579.61 L122.00 579.49 L122.65 579.42 L123.31 579.40 L123.96 579.44 L124.61 579.52 L125.25 579.66 L125.88 579.85 L126.49 580.09 L127.08 580.38 L127.65 580.71 L128.18 581.09 L128.69 581.51" fill="none" stroke="#ea4335" stroke-width="4.6" stroke-linejoin="round"/><path d="M128.47 581.32 L128.90 581.70 L129.29 582.11 L129.66 582.55 L130.00 583.01 L130.30 583.50 L130.57 584.01 L130.80 584.53 L131.00 585.07 L131.16 585.62 L131.28 586.18 L131.36 586.74 L131.40 587.31 L132.02 589.00 L132.41 589.24 L132.76 589.54 L133.07 589.87 L133.34 590.24 L133.55 590.65 L133.71 591.08 L133.81 591.52 L133.85 591.98 L133.83 592.43 L133.75 592.88 L133.61 593.32 L133.41 593.73 L133.16 594.12 L132.86 594.46 L132.52 594.77 L132.15 595.03 L131.74 595.23 L131.30 595.38 L130.86 595.47 L130.40 595.50 L123.30 595.50" fill="none" stroke="#4285f4" stroke-width="4.6" stroke-linejoin="round"/><path d="M123.50 595.50 L118.20 595.50 L117.79 595.48 L117.37 595.43 L116.97 595.35 L116.57 595.23 L116.19 595.08 L115.81 594.89 L115.46 594.68 L115.12 594.44" fill="none" stroke="#34a853" stroke-width="4.6" stroke-linejoin="round"/><path d="M115.26 594.55 L114.82 594.18 L114.42 593.78 L114.07 593.32 L113.78 592.84 L113.54 592.32 L113.37 591.78 L113.25 591.22 L113.20 590.65 L113.22 590.08 L113.30 589.52 L113.44 588.97 L113.65 588.43 L113.91 587.93 L114.23 587.46 L114.60 587.03 L115.02 586.64 L115.48 586.30 L115.98 586.02 L116.50 585.80 L117.05 585.63 L117.61 585.54 L118.18 585.50 L118.75 585.53 L119.31 585.62 L119.86 585.78 L120.38 586.00 L120.88 586.28 L121.34 586.61 L121.76 586.99 L122.14 587.42" fill="none" stroke="#fbbc05" stroke-width="4.6" stroke-linejoin="round"/><g transform="translate(340.5 588.5) scale(1.0)" fill="none" stroke="#c9c9cc" stroke-width="1.1"><path d="M1.200 -3.200 H-4.200 V4.200 H3.200 V-1"/><path d="M-0.800 0.800 L4.600 -4.600 M1.400 -4.800 H4.800 V-1.400"/></g><g transform="translate(1301 602.3) scale(0.95)" fill="none" stroke="#e6e6e6" stroke-width="1.1"><path d="M1.200 -3.200 H-4.200 V4.200 H3.200 V-1"/><path d="M-0.800 0.800 L4.600 -4.600 M1.400 -4.800 H4.800 V-1.400"/></g><path d="M1349 596.5 v12 M1343 602.5 h12" stroke="#fff" stroke-width="1.8"/><path d="M1381.2 598 h13.600 M1381.2 603.1 h13.600 M1381.2 608.2 h13.600" stroke="#fff" stroke-width="2.500" stroke-linecap="round"/><path d="M736 598.5 l4.600 -5 h-3 v-6.500 h-3.200 v6.500 h-3 z" fill="#7be04a"/><path d="M984 598.5 l4.600 -5 h-3 v-6.500 h-3.200 v6.500 h-3 z" fill="#7be04a"/><path d="M120 656.5 c3.200 0 5.200 2.300 5.200 5 c0 1.800 -0.900 3 -1.900 4.100 c-0.500 0.600 -0.700 1.200 -0.700 2 h-5.200 c0 -0.800 -0.200 -1.400 -0.700 -2 c-1 -1.100 -1.900 -2.300 -1.900 -4.100 c0 -2.700 2 -5 5.200 -5 z" fill="#f5c21a"/><rect x="117.6" y="668.4" width="4.800" height="2.800" rx="0.800" fill="#e9a91a"/><path d="M120 653.4 v1.600 M113.4 656.6 l1.100 1.100 M126.6 656.6 l-1.100 1.100" stroke="#f5c21a" stroke-width="1"/><rect x="121" y="728.2" width="8.400" height="10.800" rx="1" fill="#8e8e90"/><rect x="119.400" y="729.8" width="8.400" height="10.800" rx="1" fill="#e4e4e4"/><path d="M121 732.4 h5.200 M121 734.6 h5.200 M121 736.8 h5.200" stroke="#555" stroke-width="0.900"/><path d="M125.200 759.2 c2.600 0 4.400 1.900 4.400 4.300 c0 2.900 -2.900 5.200 -4.400 7.600 c-1.500 -2.400 -4.400 -4.700 -4.400 -7.600 c0 -2.400 1.800 -4.300 4.400 -4.300 z" fill="#f0f0f0"/><circle cx="125.200" cy="763.4" r="1.300" fill="#444"/><path d="M121.600 801.8 c-1.800 0 -2.900 -1 -2.900 -2.400 c0 -1.300 0.900 -2.200 2.200 -2.400 c0.300 -2 1.700 -3.200 3.600 -3.200 c1.700 0 2.900 0.900 3.500 2.300 c1.900 0.100 3.200 1.200 3.200 2.900 c0 1.700 -1.300 2.800 -3.200 2.800 z" fill="#f0f0f0"/><circle cx="129" cy="799.8" r="2.500" fill="#353535"/><circle cx="129" cy="799.8" r="1.700" fill="none" stroke="#f0f0f0" stroke-width="1"/><path d="M825.5 750.5 H1394 M825.5 795.5 H1394" stroke="#7d7d7d" stroke-width="1" fill="none"/><path d="M829.5 738.5 V795.5" stroke="#7d7d7d" stroke-width="1" fill="none"/><text x="821" y="754" font-size="10" fill="#fff" stroke="#fff" stroke-width="0.250" text-anchor="end">100</text><text x="821" y="799" font-size="10" fill="#fff" stroke="#fff" stroke-width="0.250" text-anchor="end">0</text><text transform="translate(792 766.9) rotate(-90)" font-size="11" fill="#fff" stroke="#fff" stroke-width="0.250" text-anchor="middle">Amount($)</text><rect x="869.3" y="763.4" width="36" height="31.6" fill="#e5ab5e"/><path d="M887.8 796 v2.500" stroke="#6a6a6a" stroke-width="1"/><text x="887.8" y="759.1" font-size="10" fill="#fff" stroke="#fff" stroke-width="0.250" text-anchor="middle">70.17</text><text x="887.8" y="811" font-size="11" fill="#fff" stroke="#fff" stroke-width="0.250" text-anchor="middle">Aug 2025</text><rect x="959" y="764.4" width="36" height="30.6" fill="#e5ab5e"/><path d="M977.5 796 v2.500" stroke="#6a6a6a" stroke-width="1"/><text x="977.5" y="760.1" font-size="10" fill="#fff" stroke="#fff" stroke-width="0.250" text-anchor="middle">68.09</text><text x="977.5" y="811" font-size="11" fill="#fff" stroke="#fff" stroke-width="0.250" text-anchor="middle">Sep 2025</text><rect x="1048.5" y="763.2" width="36" height="31.8" fill="#e5ab5e"/><path d="M1067.0 796 v2.500" stroke="#6a6a6a" stroke-width="1"/><text x="1067.0" y="758.9" font-size="10" fill="#fff" stroke="#fff" stroke-width="0.250" text-anchor="middle">70.61</text><text x="1067.0" y="811" font-size="11" fill="#fff" stroke="#fff" stroke-width="0.250" text-anchor="middle">Oct 2025</text><rect x="1138" y="787.8" width="36" height="7.2" fill="#e5ab5e"/><path d="M1156.5 796 v2.500" stroke="#6a6a6a" stroke-width="1"/><text x="1156.5" y="783.5" font-size="10" fill="#fff" stroke="#fff" stroke-width="0.250" text-anchor="middle">16.11</text><text x="1156.5" y="811" font-size="11" fill="#fff" stroke="#fff" stroke-width="0.250" text-anchor="middle">Nov 2025</text><rect x="1227.5" y="790.7" width="36" height="4.3" fill="#e5ab5e"/><path d="M1246.0 796 v2.500" stroke="#6a6a6a" stroke-width="1"/><text x="1246.0" y="786.4" font-size="10" fill="#fff" stroke="#fff" stroke-width="0.250" text-anchor="middle">9.53</text><text x="1246.0" y="811" font-size="11" fill="#fff" stroke="#fff" stroke-width="0.250" text-anchor="middle">Dec 2025</text><rect x="1317.3" y="792.0" width="36" height="3.0" fill="#f2b866"/><path d="M1317.3 795 V792.5 H1353.3 V795" fill="none" stroke="#d4d4d4" stroke-width="1" stroke-dasharray="1.600 1.400"/><path d="M1335.8 796 v2.500" stroke="#6a6a6a" stroke-width="1"/><text x="1335.8" y="787.7" font-size="10" fill="#fff" stroke="#fff" stroke-width="0.250" text-anchor="middle">6.75</text><text x="1335.8" y="811" font-size="11" fill="#fff" stroke="#fff" stroke-width="0.250" text-anchor="middle">Jan 2026</text></svg>
</body></html>
